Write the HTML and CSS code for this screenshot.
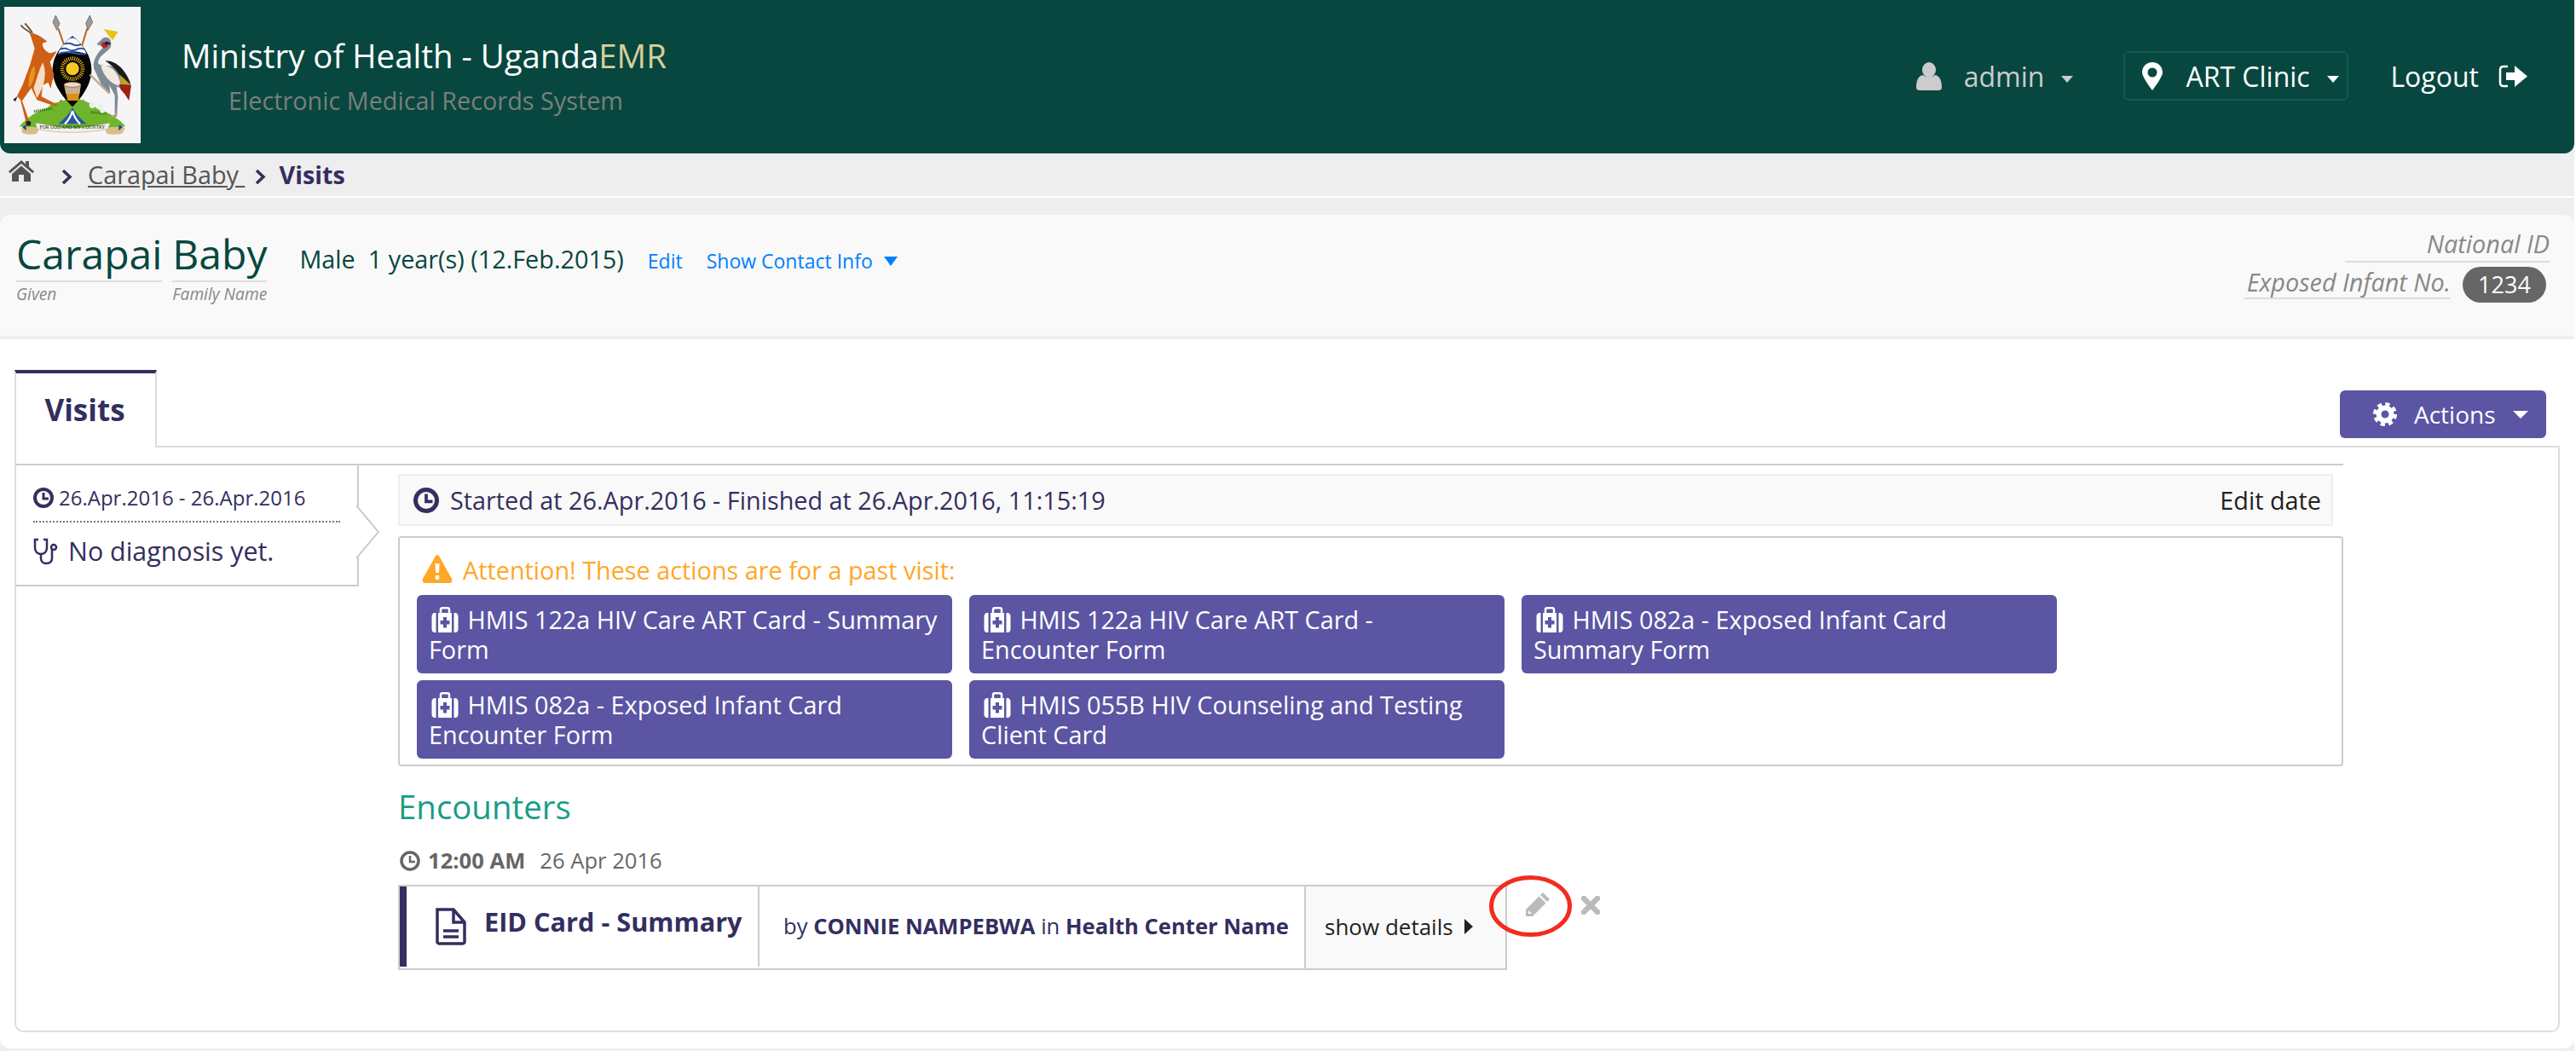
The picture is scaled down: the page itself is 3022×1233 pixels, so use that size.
FILE: index.html
```html
<!DOCTYPE html>
<html lang="en">
<head>
    <meta charset="UTF-8">
    <title>UgandaEMR - Carapai Baby</title>
    <link rel="stylesheet" href="styles.css">
</head>
<body>
<div class="page">
    <header class="top-bar">
        <svg class="logo" viewBox="15 24 480 480">
            <rect x="15" y="24" width="480" height="480" fill="#f5f5f5"/>
            <!-- spears -->
            <path d="M205 100L228 165M307 100L287 165" stroke="#b5651d" stroke-width="6"/>
            <path d="M196 54L186 78L200 106L210 82Z M316 54L326 78L310 106L302 82Z" fill="#9a9a9a" stroke="#555" stroke-width="2"/>
            <path d="M215 352L208 402M293 352L302 402" stroke="#a0521d" stroke-width="7"/>
            <!-- ground -->
            <path d="M68 445C90 420 120 395 165 380C190 355 215 360 232 350L280 350C300 355 320 362 345 385C385 395 420 420 442 445L380 450L130 450Z" fill="#6fb52c"/>
            <path d="M120 392L185 382M320 395L375 400" stroke="#3f7a22" stroke-width="9" stroke-dasharray="4 3"/>
            <circle cx="325" cy="370" r="11" fill="#eee"/><circle cx="354" cy="373" r="11" fill="#eee"/><circle cx="360" cy="390" r="8" fill="#eee"/>
            <!-- water -->
            <path d="M255 378C245 400 225 420 205 436L305 436C285 420 265 400 255 378Z" fill="#2a55a5"/>
            <path d="M255 390C250 408 240 425 228 436M255 390C260 408 270 425 282 436" stroke="#fff" stroke-width="7" fill="none"/>
            <!-- shield -->
            <path d="M255 126C290 155 322 195 322 245C322 300 285 345 255 376C225 345 185 300 185 245C185 195 220 155 255 126Z" fill="#050505"/>
            <path d="M255 126C275 143 293 162 305 190C270 178 240 178 204 190C216 162 235 143 255 126Z" fill="#fff"/>
            <path d="M240 140Q255 128 270 140L255 126Z" fill="#2a55a5"/>
            <path d="M226 156Q240 148 255 156T285 156M212 174Q226 166 240 174T270 174T298 174M204 190Q226 180 255 186T305 190" stroke="#2a55a5" stroke-width="6" fill="none"/>
            <circle cx="255" cy="242" r="36" fill="none" stroke="#f5c518" stroke-width="14" stroke-dasharray="3 4"/>
            <circle cx="255" cy="242" r="23" fill="#f7c821"/>
            <!-- drum -->
            <path d="M226 300L284 300L276 354L238 354Z" fill="#e08e1f"/>
            <path d="M226 300L284 300L280 330L232 330Z" fill="#c9b191"/>
            <ellipse cx="255" cy="298" rx="30" ry="9" fill="#eadcc6" stroke="#7a4a1d" stroke-width="2"/>
            <!-- kob -->
            <path d="M105 118C120 112 150 132 166 146L150 152C146 170 170 190 182 186L200 180L176 218L190 262L178 312L170 290L150 300L146 340L205 370L195 374L130 352L110 310L78 355L104 430L92 432L72 352L60 338L80 298L105 230L122 170Z" fill="#cf5f14"/>
            <path d="M150 220C165 250 160 300 130 345L118 310C130 280 135 250 150 220Z" fill="#f4dfc5"/>
            <path d="M120 230C130 255 115 295 102 310C98 280 105 250 120 230Z" fill="#e8951f"/>
            <path d="M108 116C95 105 80 100 74 88M114 116C105 100 95 92 88 82" stroke="#6b5638" stroke-width="6" fill="none"/>
            <path d="M62 338L46 350L54 358Z" fill="#222"/>
            <circle cx="100" cy="434" r="9" fill="#222"/>
            <!-- crane -->
            <path d="M362 134C382 125 395 140 390 165C380 185 350 190 345 220C345 230 365 232 385 232C420 240 455 280 460 300C450 310 420 310 410 305L415 340L412 400L404 400L404 335L385 300L388 330L360 305L330 240C325 205 350 180 365 165L340 156Z" fill="#7e8b96"/>
            <path d="M355 232C385 225 420 250 425 305C390 295 365 270 355 232Z" fill="#f3eadf"/>
            <path d="M370 214C410 212 445 250 460 296L430 285C420 255 395 230 370 214Z" fill="#1b1b1b"/>
            <path d="M420 262L458 296L428 296Z" fill="#c7a21a"/>
            <path d="M418 296L462 300L454 354L438 330L425 316Z" fill="#9e2211"/>
            <path d="M364 102L416 112L396 142Z" fill="#e6c31c"/>
            <circle cx="368" cy="158" r="11" fill="#c4202a"/>
            <path d="M372 146a18 14 0 0 1 18 10l-22 2z" fill="#222"/>
            <path d="M316 262L384 328" stroke="#b9a892" stroke-width="7"/>
            <path d="M378 420L412 396L412 410Z" fill="#a89a80"/>
            <!-- motto -->
            <path d="M75 450C90 442 110 448 140 450L130 470C110 476 85 472 78 468Z M440 450C425 442 395 448 370 450L375 470C400 476 425 472 432 468Z" fill="#d9bd85"/>
            <path d="M78 446L92 440L92 460Z M432 446L418 440L418 460Z" fill="#24408c"/>
            <path d="M125 432C180 440 215 452 255 450C295 452 340 440 388 432L380 455C335 462 295 466 255 466C215 466 170 462 130 455Z" fill="#f3efe2" stroke="#666"/>
            <text class="motto" x="255" y="453" text-anchor="middle">FOR GOD AND MY COUNTRY</text>
        </svg>
        <div class="brand">
            <div class="brand-title">Ministry of Health - Uganda<span class="brand-emr">EMR</span></div>
            <div class="brand-sub">Electronic Medical Records System</div>
        </div>
        <nav class="top-nav">
            <div class="nav-user">
                <svg class="icon-user" viewBox="0 0 30 33"><ellipse cx="15" cy="9" rx="8" ry="9"/><path d="M0 30C0 22 2 16 8 15C10 18 20 18 22 15C28 16 30 22 30 30C30 32 28 33 26 33H4C2 33 0 32 0 30Z"/></svg>
                <span>admin</span>
                <i class="caret caret-small"></i>
            </div>
            <div class="nav-location">
                <svg class="icon-pin" viewBox="0 0 24 33"><path fill-rule="evenodd" d="M12 0C5 0 0 5 0 12C0 17 9 29 12 33C15 29 24 17 24 12C24 5 19 0 12 0ZM12 6.5A5.5 5.5 0 1 1 12 17.5A5.5 5.5 0 1 1 12 6.5Z"/></svg>
                <span>ART Clinic</span>
                <i class="caret caret-small"></i>
            </div>
            <div class="nav-logout">
                <span>Logout</span>
                <svg class="icon-logout" viewBox="0 0 34 27"><path d="M11 2H6C3 2 2 4 2 6V21C2 23 3 25 6 25H11" fill="none" stroke="#fff" stroke-width="2.5"/><path d="M9 9H19V1L34 13.5L19 26V18H9Z"/></svg>
            </div>
        </nav>
    </header>

    <div class="breadcrumb">
        <svg class="icon-home" viewBox="0 0 30 25"><path d="M15 0L0 13L1.8 15.2L15 4L28.2 15.2L30 13L24 7.8V1H20V4.400Z"/><path d="M15 6.500L4 16V25H12V17H18V25H26V16Z"/></svg>
        <svg class="crumb-sep first-sep" viewBox="0 0 13 17"><path d="M2 1L10 8.500L2 16" fill="none" stroke="#332f5f" stroke-width="3.500"/></svg>
        <a class="crumb-link">Carapai Baby&nbsp;</a>
        <svg class="crumb-sep" viewBox="0 0 13 17"><path d="M2 1L10 8.500L2 16" fill="none" stroke="#332f5f" stroke-width="3.500"/></svg>
        <strong class="crumb-current">Visits</strong>
    </div>

    <section class="patient-header">
        <div class="patient-names">
            <div class="name-part">
                <div class="name-value">Carapai</div>
                <div class="name-label">Given</div>
            </div>
            <div class="name-part">
                <div class="name-value">Baby</div>
                <div class="name-label">Family Name</div>
            </div>
        </div>
        <div class="patient-info">
            <span class="patient-demo">Male&nbsp; 1 year(s) (12.Feb.2015)</span>
            <a class="patient-link">Edit</a>
            <a class="patient-link contact-link">Show Contact Info<i class="caret caret-blue"></i></a>
        </div>
        <div class="patient-ids">
            <div class="id-national">National ID</div>
            <div class="id-row">
                <span class="id-label">Exposed Infant No.</span>
                <span class="id-badge">1234</span>
            </div>
        </div>
    </section>

    <main class="content">
        <div class="tab-row">
            <div class="tab">Visits</div>
            <button class="actions-btn">
                <svg class="icon-gear" viewBox="0 0 28 28"><circle cx="14" cy="14" r="7.500" fill="none" stroke="#fff" stroke-width="6"/><circle cx="14" cy="14" r="12" fill="none" stroke="#fff" stroke-width="4" stroke-dasharray="5.200 4.225"/></svg>
                <span>Actions</span>
                <i class="caret caret-white"></i>
            </button>
        </div>

        <div class="tab-panel">
            <div class="visit-row">
                <aside class="visit-item">
                    <div class="visit-dates">
                        <svg class="icon-clock" viewBox="0 0 24 24"><circle cx="12" cy="12" r="10" fill="none" stroke="#332f5f" stroke-width="4"/><path d="M12 6V13H18" fill="none" stroke="#332f5f" stroke-width="3"/></svg>
                        <span>26.Apr.2016 - 26.Apr.2016</span>
                    </div>
                    <div class="visit-diagnosis">
                        <svg class="icon-stetho" viewBox="0 0 30 32" fill="none" stroke="#332f5f" stroke-width="2.500"><path d="M6 2H2V11C2 17 6 19 9 19C12 19 16 17 16 11V2H12"/><path d="M9 19V24C9 28 12 30 15 30C19 30 22 28 22 24V14"/><circle cx="24" cy="11" r="3"/></svg>
                        <span>No diagnosis yet.</span>
                    </div>
                    <svg class="visit-arrow" viewBox="0 0 28 62"><path d="M1 0L27 31L1 62" fill="#fff" stroke="#ccc" stroke-width="2"/></svg>
                </aside>

                <div class="visit-main">
                    <div class="visit-head">
                        <div class="visit-time">
                            <svg class="icon-clock-lg" viewBox="0 0 24 24"><circle cx="12" cy="12" r="10" fill="none" stroke="#332f5f" stroke-width="4"/><path d="M12 6V13H18" fill="none" stroke="#332f5f" stroke-width="3"/></svg>
                            <span>Started at 26.Apr.2016 - Finished at 26.Apr.2016, 11:15:19</span>
                        </div>
                        <a class="edit-date">Edit date</a>
                    </div>

                    <div class="past-visit">
                        <div class="past-warning">
                            <svg class="icon-warning" viewBox="0 0 36 33"><path fill-rule="evenodd" d="M18 0C19 0 20 1 20.500 2L35 28C36 31 35 33 32 33H4C1 33 0 31 1 28L15.500 2C16 1 17 0 18 0ZM15.500 10L16 21H20L20.500 10ZM15.800 24V29H20.200V24Z"/></svg>
                            <span>Attention! These actions are for a past visit:</span>
                        </div>
                        <div class="form-buttons">
                            <a class="form-btn"><svg class="icon-kit" viewBox="0 0 32 30"><use href="#kit"/></svg> HMIS 122a HIV Care ART Card - Summary Form</a>
                            <a class="form-btn"><svg class="icon-kit" viewBox="0 0 32 30"><use href="#kit"/></svg> HMIS 122a HIV Care ART Card - Encounter Form</a>
                            <a class="form-btn"><svg class="icon-kit" viewBox="0 0 32 30"><use href="#kit"/></svg> HMIS 082a - Exposed Infant Card Summary Form</a>
                            <a class="form-btn"><svg class="icon-kit" viewBox="0 0 32 30"><use href="#kit"/></svg> HMIS 082a - Exposed Infant Card Encounter Form</a>
                            <a class="form-btn"><svg class="icon-kit" viewBox="0 0 32 30"><use href="#kit"/></svg> HMIS 055B HIV Counseling and Testing Client Card</a>
                        </div>
                    </div>

                    <h3 class="encounters-title">Encounters</h3>
                    <div class="encounter-time">
                        <svg class="icon-clock-sm" viewBox="0 0 24 24"><circle cx="12" cy="12" r="10" fill="none" stroke="#666" stroke-width="3.500"/><path d="M12 6V13H18" fill="none" stroke="#666" stroke-width="2.500"/></svg>
                        <strong>12:00 AM</strong>
                        <span>26 Apr 2016</span>
                    </div>
                    <div class="encounter-row">
                        <div class="encounter">
                            <div class="enc-title">
                                <svg class="icon-doc" viewBox="0 0 36 44" fill="none" stroke="#332f5f" stroke-width="3.500"><path d="M2 2H21L34 17V40C34 41 33 42 32 42H4C3 42 2 41 2 40Z"/><path d="M21 2V17H34M9 27H27M9 34H27"/></svg>
                                <span>EID Card - Summary</span>
                            </div>
                            <div class="enc-by">by <b>CONNIE NAMPEBWA</b> in <b>Health Center Name</b></div>
                            <div class="enc-details">
                                <span>show details</span>
                                <i class="caret-right"></i>
                            </div>
                        </div>
                        <svg class="icon-pencil" viewBox="0 0 28 28"><path fill="#bbb" d="M20 0L28 8L25 11L17 3ZM15.500 4.500L23.500 12.500L8 28H0V20ZM3 21V25H7L5.500 23.500Z" fill-rule="evenodd"/></svg>
                        <svg class="icon-times" viewBox="0 0 22 22"><path d="M3 3L19 19M19 3L3 19" stroke="#bbb" stroke-width="6.500" stroke-linecap="round"/></svg>
                        <svg class="red-circle" viewBox="0 0 97 72"><ellipse cx="48.500" cy="36" rx="46" ry="33.500" fill="none" stroke="#f22c1e" stroke-width="5"/></svg>
                    </div>
                </div>
            </div>
        </div>
    </main>
</div>

<svg class="svg-defs">
    <symbol id="kit" viewBox="0 0 32 30">
        <path fill="#fff" fill-rule="evenodd" d="M8 7H24V30H8ZM14 12V16H10.500V20.500H14V24.500H18V20.500H21.500V16H18V12Z"/>
        <path fill="#fff" d="M5.500 7V30H4C2 30 0.500 28.500 0.500 26V11C0.500 9 2 7 4 7ZM26.500 7H28C30 7 31.500 9 31.500 11V26C31.500 28.500 30 30 28 30H26.500Z"/>
        <path fill="none" stroke="#fff" stroke-width="2.500" d="M11 7V3C11 2 12 1.300 13 1.300H19C20 1.300 21 2 21 3V7"/>
    </symbol>
</svg>
</body>
</html>
```

FILE: styles.css
```css
* {
    box-sizing: border-box;
}

body {
    margin: 0;
    background: #fff;
    font-family: "Open Sans", sans-serif;
    font-size: 28.8px;
    color: #332f5f;
}

.page {
    width: 3020px;
    background: #eee;
    padding-bottom: 3px;
}

/* top bar */
.top-bar {
    height: 180px;
    background: #07473f;
    border-radius: 0 0 12px 12px;
    display: flex;
    color: #fff;
}

.logo {
    width: 160px;
    height: 160px;
    margin: 8px 0 0 5px;
}

.motto {
    font-family: "Liberation Serif", serif;
    font-size: 17px;
    fill: #222;
}

.brand {
    margin-left: 48px;
    padding-top: 41px;
}

.brand-title {
    font-size: 38.4px;
    line-height: 48px;
}

.brand-emr {
    color: #d8cf9a;
}

.brand-sub {
    margin: 11px 0 0 55px;
    font-size: 28.8px;
    line-height: 36px;
    color: #7a7f7c;
}

.top-nav {
    margin-left: auto;
    display: flex;
    align-items: center;
    height: 178px;
    font-size: 32px;
}

.nav-user {
    display: flex;
    align-items: center;
    color: #ccc;
    margin-right: 59px;
}

.icon-user {
    width: 30px;
    height: 33px;
    fill: #ccc;
    margin-right: 26px;
}

.nav-location {
    display: flex;
    align-items: center;
    width: 264px;
    height: 58px;
    border: 2px solid #0d5c52;
    border-radius: 6px;
    padding-left: 20px;
    margin-right: 49px;
}

.icon-pin {
    width: 24px;
    height: 33px;
    fill: #fff;
    margin-right: 27px;
}

.nav-logout {
    display: flex;
    align-items: center;
    margin-right: 55px;
}

.icon-logout {
    width: 34px;
    height: 27px;
    fill: #fff;
    margin-left: 23px;
}

.caret {
    display: inline-block;
    width: 0;
    height: 0;
    border-style: solid;
    border-color: currentColor transparent transparent;
}

.caret-small {
    border-width: 8px 7px 0;
    margin: 8px 0 0 20px;
}

.caret-blue {
    border-width: 11px 8px 0;
    margin: 0 0 4px 13px;
    vertical-align: middle;
}

.caret-white {
    border-width: 9px 9px 0;
    margin-left: 20px;
}

/* breadcrumb */
.breadcrumb {
    height: 52px;
    border-bottom: 2px solid #fff;
    display: flex;
    align-items: center;
    padding: 0 0 2px 10px;
}

.icon-home {
    width: 30px;
    height: 25px;
    fill: #555;
    margin-bottom: 8px;
}

.crumb-sep {
    width: 13px;
    height: 17px;
    margin: 6px 14px 0 12px;
}

.first-sep {
    margin-left: 32px;
    margin-right: 18px;
}

.crumb-link {
    color: #555;
    text-decoration: underline;
}

.crumb-current {
    margin-left: 1px;
}

/* patient header */
.patient-header {
    margin-top: 20px;
    height: 146px;
    background: #f9f9f9;
    border-bottom: 4px solid #eee;
    border-radius: 12px 12px 0 0;
    display: flex;
    padding-left: 19px;
}

.patient-names {
    display: flex;
    gap: 12px;
    padding-top: 14px;
}

.name-value {
    font-size: 48px;
    line-height: 63px;
    color: #07473f;
    border-bottom: 2px solid #ddd;
}

.name-label {
    font-size: 19.2px;
    line-height: 28px;
    font-style: italic;
    color: #888;
}

.patient-info {
    margin-left: 38px;
    padding-top: 32px;
    display: flex;
    align-items: baseline;
    height: 70px;
}

.patient-demo {
    color: #07473f;
}

.patient-link {
    color: #007fff;
    font-size: 23px;
    margin-left: 28px;
}

.patient-ids {
    margin-left: auto;
    margin-right: 29px;
    padding-top: 14px;
    display: flex;
    flex-direction: column;
    align-items: flex-end;
    font-style: italic;
    color: #888;
}

.id-national {
    width: 240px;
    text-align: right;
    line-height: 40px;
    border-bottom: 2px solid #ddd;
}

.id-row {
    display: flex;
    align-items: flex-start;
    margin: 4px 4px 0 0;
}

.id-label {
    line-height: 37px;
    border-bottom: 2px solid #ddd;
    padding: 0 0 0 3px;
}

.id-badge {
    margin: 1px 0 0 14px;
    width: 98px;
    height: 42px;
    line-height: 42px;
    text-align: center;
    border-radius: 21px;
    background: #666;
    color: #fff;
    font-style: normal;
    font-size: 27px;
}

/* main card */
.content {
    background: #fff;
    border-radius: 0 0 12px 12px;
    height: 832px;
    padding: 36px 17px 0;
}

.tab-row {
    display: flex;
    justify-content: space-between;
    align-items: flex-start;
    height: 89px;
}

.tab {
    position: relative;
    z-index: 1;
    width: 167px;
    height: 91px;
    background: #fff;
    border: 2px solid #ddd;
    border-top: 4px solid #332f5f;
    border-bottom: none;
    padding-right: 2px;
    text-align: center;
    font-size: 35px;
    font-weight: 700;
    line-height: 86px;
}

.actions-btn {
    width: 242px;
    height: 56px;
    margin: 24px 16px 0 0;
    border: none;
    border-radius: 6px;
    background: #5b55a3;
    color: #fff;
    font-family: inherit;
    font-size: 28px;
    line-height: 50px;
    display: flex;
    align-items: center;
    padding-left: 39px;
}

.icon-gear {
    width: 28px;
    height: 28px;
    margin-right: 20px;
}

.tab-panel {
    height: 688px;
    border: 2px solid #ddd;
    border-radius: 0 0 10px 10px;
    padding-top: 19px;
}

.visit-row {
    display: flex;
    width: 2730px;
    border-top: 2px solid #ccc;
    align-items: flex-start;
}

/* visit list item */
.visit-item {
    position: relative;
    width: 402px;
    height: 142px;
    border-right: 2px solid #ccc;
    border-bottom: 2px solid #ccc;
    padding: 20px 20px 0;
}

.visit-dates {
    display: flex;
    align-items: center;
    font-size: 24px;
    line-height: 36px;
    padding-bottom: 9px;
    border-bottom: 2px dotted #777;
}

.icon-clock {
    width: 24px;
    height: 24px;
    margin-right: 6px;
}

.visit-diagnosis {
    display: flex;
    align-items: center;
    font-size: 30.4px;
    line-height: 48px;
    margin-top: 10px;
}

.icon-stetho {
    width: 30px;
    height: 32px;
    margin-right: 11px;
}

.visit-arrow {
    position: absolute;
    left: 398px;
    top: 47px;
    width: 28px;
    height: 62px;
}

/* visit details */
.visit-main {
    width: 2282px;
    margin-left: 46px;
    padding-top: 10px;
}

.visit-head {
    width: 2270px;
    height: 61px;
    background: #f9f9f9;
    border: 2px solid #eee;
    display: flex;
    justify-content: space-between;
    align-items: center;
    padding: 0 12px 0 16px;
}

.visit-time {
    display: flex;
    align-items: center;
}

.icon-clock-lg {
    width: 30px;
    height: 30px;
    margin-right: 13px;
}

.edit-date {
    color: #222;
}

.past-visit {
    margin-top: 12px;
    height: 270px;
    border: 2px solid #ccc;
    border-radius: 4px;
    padding: 17px 20px 0;
}

.past-warning {
    display: flex;
    align-items: center;
    height: 40px;
    margin-bottom: 10px;
    color: #ffa726;
    padding-left: 6px;
}

.icon-warning {
    width: 36px;
    height: 33px;
    fill: #ffa726;
    margin-right: 12px;
    margin-top: -2px;
}

.form-buttons {
    display: flex;
    flex-wrap: wrap;
    gap: 8px 20px;
}

.form-btn {
    width: 628px;
    height: 92px;
    padding: 11px 10px 11px 14px;
    border-radius: 6px;
    background: #5b55a3;
    color: #fff;
    line-height: 35px;
}

.icon-kit {
    width: 32px;
    height: 30px;
    margin-left: 3px;
    margin-right: 3px;
    vertical-align: -4px;
}

.encounters-title {
    margin: 25px 0 0;
    font-size: 38.4px;
    font-weight: 400;
    line-height: 44px;
    color: #1a9c87;
}

.encounter-time {
    display: flex;
    align-items: center;
    margin: 26px 0 12px 2px;
    font-size: 25.6px;
    line-height: 32px;
    color: #666;
}

.icon-clock-sm {
    width: 24px;
    height: 24px;
    margin-right: 9px;
}

.encounter-time span {
    margin-left: 17px;
}

.encounter-row {
    position: relative;
    display: flex;
    align-items: flex-start;
}

.encounter {
    width: 1301px;
    height: 100px;
    border: 2px solid #ccc;
    display: flex;
    font-size: 25.6px;
}

.enc-title {
    width: 422px;
    height: 94px;
    border-left: 8px solid #332f5f;
    border-right: 2px solid #ccc;
    display: flex;
    align-items: flex-start;
    padding: 21px 0 0 34px;
    font-size: 30.7px;
    font-weight: 700;
    line-height: 40px;
}

.icon-doc {
    width: 36px;
    height: 44px;
    margin: 4px 21px 0 0;
}

.enc-by {
    width: 641px;
    padding: 31px 0 0 28px;
    line-height: 32px;
    border-right: 2px solid #ccc;
    white-space: nowrap;
}

.enc-details {
    flex: 1;
    font-size: 26px;
    background: #f9f9f9;
    color: #222;
    display: flex;
    align-items: center;
    padding: 0 0 2px 22px;
}

.caret-right {
    width: 0;
    height: 0;
    margin-left: 13px;
    border-style: solid;
    border-width: 9px 0 9px 10px;
    border-color: transparent transparent transparent #222;
}

.icon-pencil {
    width: 28px;
    height: 28px;
    margin: 9px 0 0 22px;
}

.icon-times {
    width: 22px;
    height: 22px;
    margin: 13px 0 0 37px;
}

.red-circle {
    position: absolute;
    left: 1280px;
    top: -11px;
    width: 97px;
    height: 72px;
}

.svg-defs {
    display: none;
}
```
